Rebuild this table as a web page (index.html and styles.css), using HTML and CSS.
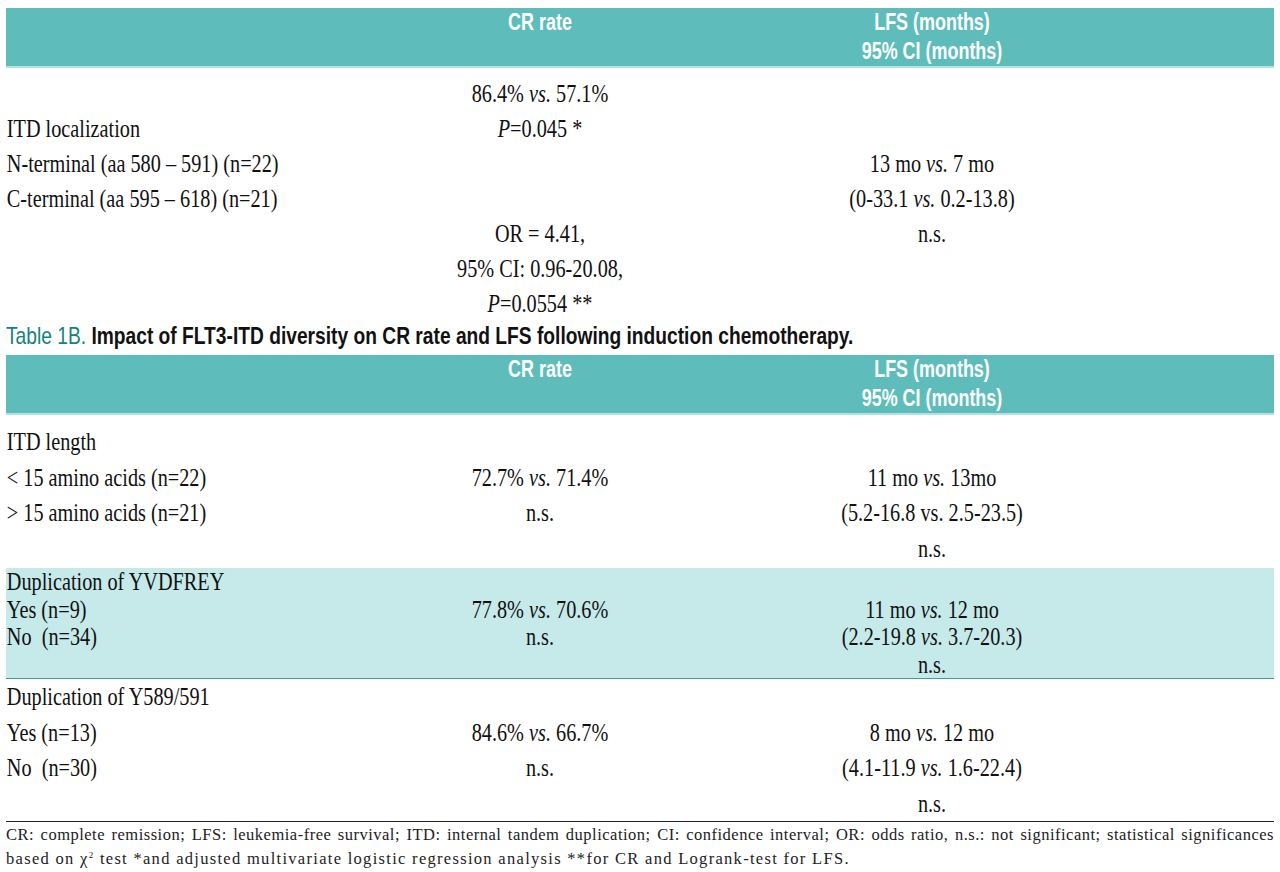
FILE: index.html
```html
<!DOCTYPE html>
<html lang="en">
<head>
<meta charset="utf-8">
<title>Table 1 – FLT3-ITD diversity</title>
<link rel="stylesheet" href="styles.css">
</head>
<body>
<div class="page">
  <section class="tbl">
    <div class="thead grid">
      <div class="c c1"></div>
      <div class="c c2">CR rate</div>
      <div class="c c3">LFS (months)<br>95% CI (months)</div>
    </div>
    <div class="tbody grid first">
      <div class="c c1"></div><div class="c c2">86.4% <i>vs.</i> 57.1%</div><div class="c c3"></div>
      <div class="c c1">ITD localization</div><div class="c c2"><i>P</i>=0.045 *</div><div class="c c3"></div>
      <div class="c c1">N-terminal (aa 580 – 591) (n=22)</div><div class="c c2"></div><div class="c c3">13 mo <i>vs.</i> 7 mo</div>
      <div class="c c1">C-terminal (aa 595 – 618) (n=21)</div><div class="c c2"></div><div class="c c3">(0-33.1 <i>vs.</i> 0.2-13.8)</div>
      <div class="c c1"></div><div class="c c2">OR = 4.41,</div><div class="c c3">n.s.</div>
      <div class="c c1"></div><div class="c c2">95% CI: 0.96-20.08,</div><div class="c c3"></div>
      <div class="c c1"></div><div class="c c2"><i>P</i>=0.0554 **</div><div class="c c3"></div>
    </div>
  </section>

  <h2 class="caption"><span class="cap-inner"><span class="cap-num">Table 1B.</span> Impact of FLT3-ITD diversity on CR rate and LFS following induction chemotherapy.</span></h2>

  <section class="tbl">
    <div class="thead grid">
      <div class="c c1"></div>
      <div class="c c2">CR rate</div>
      <div class="c c3">LFS (months)<br>95% CI (months)</div>
    </div>
    <div class="tbody grid g-len">
      <div class="c c1">ITD length</div><div class="c c2"></div><div class="c c3"></div>
      <div class="c c1">&lt; 15 amino acids (n=22)</div><div class="c c2">72.7% <i>vs.</i> 71.4%</div><div class="c c3">11 mo <i>vs.</i> 13mo</div>
      <div class="c c1">&gt; 15 amino acids (n=21)</div><div class="c c2">n.s.</div><div class="c c3">(5.2-16.8 vs. 2.5-23.5)</div>
      <div class="c c1"></div><div class="c c2"></div><div class="c c3">n.s.</div>
    </div>
    <div class="tbody grid g-hl">
      <div class="c c1">Duplication of YVDFREY</div><div class="c c2"></div><div class="c c3"></div>
      <div class="c c1">Yes (n=9)</div><div class="c c2">77.8% <i>vs.</i> 70.6%</div><div class="c c3">11 mo <i>vs.</i> 12 mo</div>
      <div class="c c1">No&nbsp; (n=34)</div><div class="c c2">n.s.</div><div class="c c3">(2.2-19.8 <i>vs.</i> 3.7-20.3)</div>
      <div class="c c1"></div><div class="c c2"></div><div class="c c3">n.s.</div>
    </div>
    <div class="tbody grid g-y">
      <div class="c c1">Duplication of Y589/591</div><div class="c c2"></div><div class="c c3"></div>
      <div class="c c1">Yes (n=13)</div><div class="c c2">84.6% <i>vs.</i> 66.7%</div><div class="c c3">8 mo <i>vs.</i> 12 mo</div>
      <div class="c c1">No&nbsp; (n=30)</div><div class="c c2">n.s.</div><div class="c c3">(4.1-11.9 <i>vs.</i> 1.6-22.4)</div>
      <div class="c c1"></div><div class="c c2"></div><div class="c c3">n.s.</div>
    </div>
  </section>

  <footer class="notes">
    <p class="n1">CR: complete remission; LFS: leukemia-free survival; ITD: internal tandem duplication; CI: confidence interval; OR: odds ratio, n.s.: not significant; statistical significances</p>
    <p class="n2">based on χ<sup>2</sup> test *and adjusted multivariate logistic regression analysis **for CR and Logrank-test for LFS.</p>
  </footer>
</div>
</body>
</html>
```

FILE: styles.css
```css
* { box-sizing: border-box; }
html, body { margin: 0; padding: 0; background: #fff; }
body { color: #111; font-family: "Liberation Serif", "Times New Roman", serif; }

.page { width: 1280px; padding: 8px 6px 0 6px; }

.tbl { width: 1268px; }

.grid {
  display: grid;
  grid-template-columns: 334px 400px 384px 150px;
}
.grid .c3 { grid-column: 3; }
.grid .c1 { grid-column: 1; }

.c {
  white-space: nowrap;
  transform: scaleX(0.81);
  transform-origin: center center;
  text-align: center;
}
.c1 { text-align: left; transform-origin: left center; padding-left: 1px; }

.thead {
  background: #5ebdbb;
  border-bottom: 2px solid #b3e3e1;
  height: 60px;
  color: #fff;
  font-family: "Liberation Sans", Arial, sans-serif;
  font-weight: bold;
  font-size: 23px;
  line-height: 29px;
}
.thead .c { transform: scaleX(0.78); }

.tbody {
  font-size: 25px;
  line-height: 35px;
}
.tbody i { font-style: italic; }

.first { padding: 8px 0 0 0; }

.g-len { padding: 9px 0 2px 0; line-height: 35.5px; }

.g-hl {
  background: #c6eaea;
  border-bottom: 1px solid #3d9d9b;
  line-height: 27.5px;
}

.g-y { line-height: 35.5px; }

.caption {
  margin: 1px 0 5px 0;
  font-family: "Liberation Sans", Arial, sans-serif;
  font-weight: bold;
  font-size: 24px;
  line-height: 28px;
  color: #111;
  white-space: nowrap;
}
.cap-inner {
  display: inline-block;
  transform: scaleX(0.80);
  transform-origin: left center;
}
.cap-num { color: #168181; font-weight: normal; }

.notes {
  border-top: 1px solid #222;
  font-family: "Liberation Serif", "Times New Roman", serif;
  font-size: 16.5px;
  line-height: 24px;
  color: #222;
  padding-top: 1px;
}
.notes p { margin: 0; white-space: nowrap; }
.n1 { letter-spacing: 0.5px; text-align: justify; text-align-last: justify; }
.n2 { letter-spacing: 1.3px; }
.notes sup { font-size: 9px; line-height: 0; vertical-align: 6px; }
```
